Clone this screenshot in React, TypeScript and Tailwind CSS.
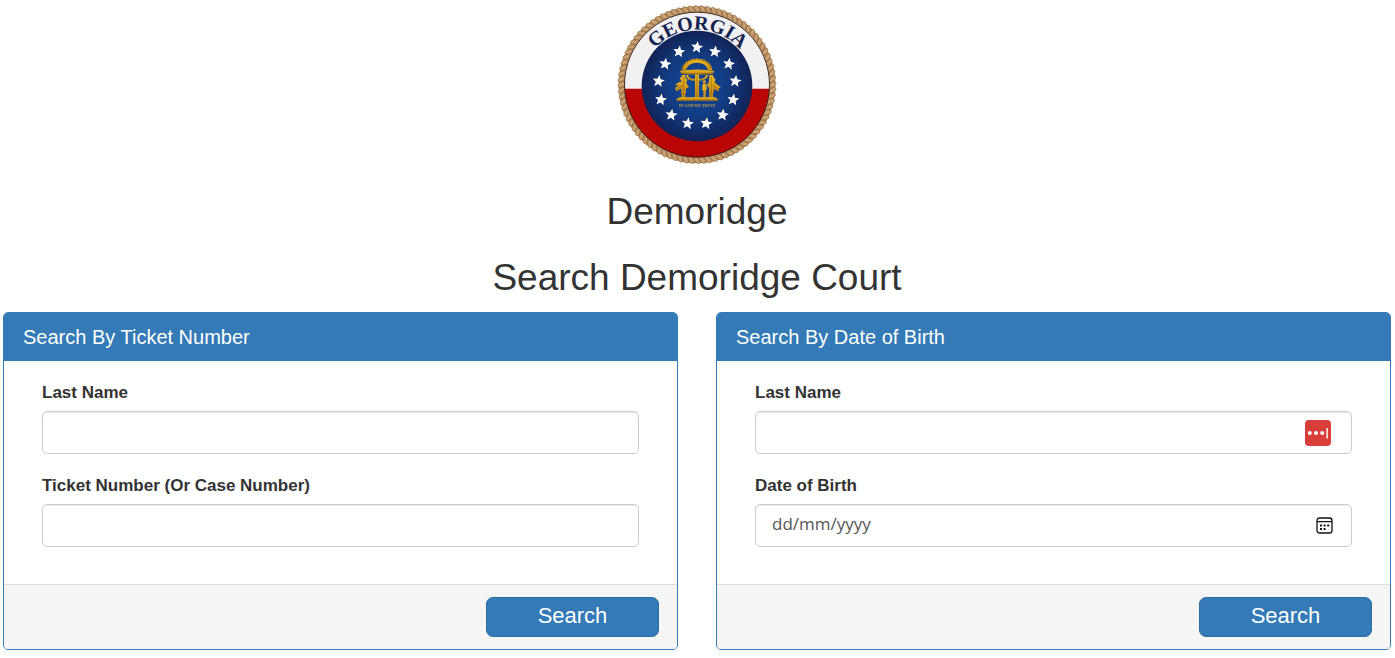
import type { InputHTMLAttributes, ReactNode } from 'react';

const STARS = Array.from({ length: 13 }, (_, i) => {
  const a = (i * 2 * Math.PI) / 13;
  return { x: 256 + 116 * Math.sin(a), y: 259 - 116 * Math.cos(a) };
});

const ROPE = Array.from({ length: 84 }, (_, i) => (i * 360) / 84);

const starPoints = Array.from({ length: 10 }, (_, i) => {
  const r = i % 2 === 0 ? 19 : 8.4;
  const a = (i * Math.PI) / 5;
  return `${(r * Math.sin(a)).toFixed(1)},${(-r * Math.cos(a)).toFixed(1)}`;
}).join(' ');

function Seal() {
  return (
    <svg viewBox="16 16 480 480" className="size-40" role="img" aria-label="Georgia state seal">
      <defs>
        <radialGradient id="blue">
          <stop offset="0" stopColor="#12499a" />
          <stop offset="0.55" stopColor="#123c82" />
          <stop offset="1" stopColor="#112355" />
        </radialGradient>
        <linearGradient id="gold" x1="0" y1="0" x2="0" y2="1">
          <stop offset="0" stopColor="#e9b423" />
          <stop offset="0.5" stopColor="#d9a01a" />
          <stop offset="1" stopColor="#c48a14" />
        </linearGradient>
        <path id="nameArc" d="M87 259 A169 169 0 0 1 425 259" />
      </defs>
      <circle cx="256" cy="255" r="227" fill="none" stroke="#a57c50" strokeWidth="17" />
      {ROPE.map((a) => (
        <ellipse
          key={a}
          cx="256"
          cy="28"
          rx="6"
          ry="12"
          transform={`rotate(${a} 256 255) rotate(-35 256 28)`}
          fill="#c9a174"
          stroke="#94693e"
          strokeWidth="1.5"
        />
      ))}
      <circle cx="256" cy="255" r="218" fill="#f1f1f4" />
      <path d="M38.3 267 H473.7 A218 218 0 0 1 38.3 267 Z" fill="#b90504" />
      <circle cx="256" cy="255" r="217.5" fill="none" stroke="#3b2416" strokeWidth="3" />
      <circle cx="256" cy="259" r="166" fill="url(#blue)" />
      <text
        fill="#14224f"
        fontFamily="Liberation Serif, serif"
        fontWeight="700"
        fontSize="60"
        textAnchor="middle"
      >
        <textPath href="#nameArc" startOffset="50.4%">
          GEORGIA
        </textPath>
      </text>
      {STARS.map((s) => (
        <polygon
          key={`${s.x}`}
          points={starPoints}
          transform={`translate(${s.x} ${s.y}) rotate(8)`}
          fill="#fff"
        />
      ))}
      <g fill="none" stroke="url(#gold)">
        <path d="M216 212 C222 173 290 173 296 212" strokeWidth="13" />
        <path d="M226 226 Q229 243 254 240 Q281 243 287 226" strokeWidth="6" />
      </g>
      <g fill="url(#gold)">
        <path d="M204 214 Q256 205 308 214 L303 222 Q256 227 210 222 Z" />
        <rect x="250" y="224" width="12" height="72" />
        <rect x="210" y="226" width="11" height="70" />
        <rect x="293" y="226" width="11" height="70" />
        <path d="M204 234 L218 230 L227 240 L224 250 L232 262 L222 268 L224 280 H208 L210 266 L194 275 L190 264 L202 258 L190 257 L200 248 L210 247 Z" />
        <path d="M292 234 L304 230 L312 240 L308 247 L318 256 L328 262 L321 266 L322 275 L306 268 L306 280 H292 L292 266 L286 256 L292 246 Z" />
        <circle cx="278" cy="247" r="5" />
        <path d="M273 253 H284 L286 270 L282 272 V295 H275 V273 L271 270 Z" />
        <path d="M204 293 H310 L318 298 V303 H195 V298 Z" />
      </g>
      <g fill="none" stroke="#7d560f" strokeWidth="2">
        <path d="M213 208 C220 170 292 170 299 208" strokeWidth="4" strokeDasharray="4 4" />
        <path d="M208 220 Q256 226 304 220 M200 301 H314 M196 269 L214 257 M304 256 L319 270" />
        <path d="M256 228 V293 M216 232 V292 M299 232 V292" strokeWidth="1.5" />
      </g>
      <text
        x="256"
        y="322"
        fill="#c79a3b"
        fontFamily="Liberation Serif, serif"
        fontWeight="700"
        fontSize="12"
        textAnchor="middle"
      >
        IN GOD WE TRUST
      </text>
    </svg>
  );
}

function Field({
  id,
  label,
  icon,
  ...rest
}: { id: string; label: string; icon?: ReactNode } & InputHTMLAttributes<HTMLInputElement>) {
  return (
    <div>
      <label htmlFor={id} className="block pb-1.5 text-[17px] leading-6 font-bold">
        {label}
      </label>
      <div className="flex h-[43px] items-center rounded-[5px] border border-[#ccc] bg-white pr-4 shadow-[inset_0_1px_1px_rgba(0,0,0,0.075)] focus-within:border-[#66afe9]">
        <input
          id={id}
          type="text"
          className="h-full min-w-0 flex-1 bg-transparent px-4 pb-1 font-['Open_Sans','Noto_Sans',sans-serif] text-[17px] text-[#555] outline-none placeholder:text-[#555]"
          {...rest}
        />
        {icon}
      </div>
    </div>
  );
}

function Panel({ title, children }: { title: string; children: ReactNode }) {
  return (
    <form
      className="overflow-hidden rounded-[5px] border border-[#337ab7]"
      onSubmit={(e) => e.preventDefault()}
    >
      <h3 className="bg-[#337ab7] px-[19px] py-3 text-[20px] leading-6 text-white">{title}</h3>
      <div className="flex flex-col gap-5 px-[38px] pt-5 pb-[37px]">{children}</div>
      <div className="flex justify-end border-t border-[#ddd] bg-[#f5f5f5] px-[18px] py-3">
        <button
          type="submit"
          className="h-10 w-[173px] rounded-[7px] border border-[#2e6da4] bg-[#337ab7] pb-0.5 text-[22px] leading-7 text-white hover:bg-[#286090]"
        >
          Search
        </button>
      </div>
    </form>
  );
}

function FillIcon() {
  return (
    <button type="button" aria-label="Fill last name" className="mr-1">
      <svg viewBox="0 0 26 26" className="size-[26px]">
        <rect width="26" height="26" rx="4" fill="#d83e3a" />
        <g fill="#fff">
          <circle cx="4.8" cy="13" r="2" />
          <circle cx="11" cy="13" r="2" />
          <circle cx="17.2" cy="13" r="2" />
          <rect x="21.4" y="8" width="1.4" height="10.5" />
        </g>
      </svg>
    </button>
  );
}

function CalendarIcon() {
  return (
    <button type="button" aria-label="Choose date" className="mr-0.5">
      <svg viewBox="0 0 17 17" className="size-[17px]">
        <rect x="1" y="1" width="15" height="15" rx="2.5" fill="none" stroke="#111" strokeWidth="1.3" />
        <path d="M1 4.6H16" stroke="#111" strokeWidth="1.2" />
        <path
          d="M4 7.5h2v2H4zM7.6 7.5h2v2h-2zM11.2 7.5h2v2h-2zM4 11h2v2H4zM7.6 11h2v2h-2z"
          fill="#111"
        />
      </svg>
    </button>
  );
}

export default function App() {
  return (
    <main className="bg-white pt-[5px] pr-1 pb-2 pl-[3px] font-['Liberation_Sans',Arial,sans-serif] text-[#333]">
      <header className="flex flex-col items-center text-center">
        <Seal />
        <h1 className="mt-[26px] text-[37px] leading-[42px]">Demoridge</h1>
        <h2 className="mt-6 text-[37px] leading-[42px]">Search Demoridge Court</h2>
      </header>
      <div className="mt-[13px] grid grid-cols-1 gap-[38px] md:grid-cols-2">
        <Panel title="Search By Ticket Number">
          <Field id="ticket-last-name" label="Last Name" />
          <Field id="ticket-number" label="Ticket Number (Or Case Number)" />
        </Panel>
        <Panel title="Search By Date of Birth">
          <Field id="dob-last-name" label="Last Name" icon={<FillIcon />} />
          <Field id="dob" label="Date of Birth" placeholder="dd/mm/yyyy" icon={<CalendarIcon />} />
        </Panel>
      </div>
    </main>
  );
}
